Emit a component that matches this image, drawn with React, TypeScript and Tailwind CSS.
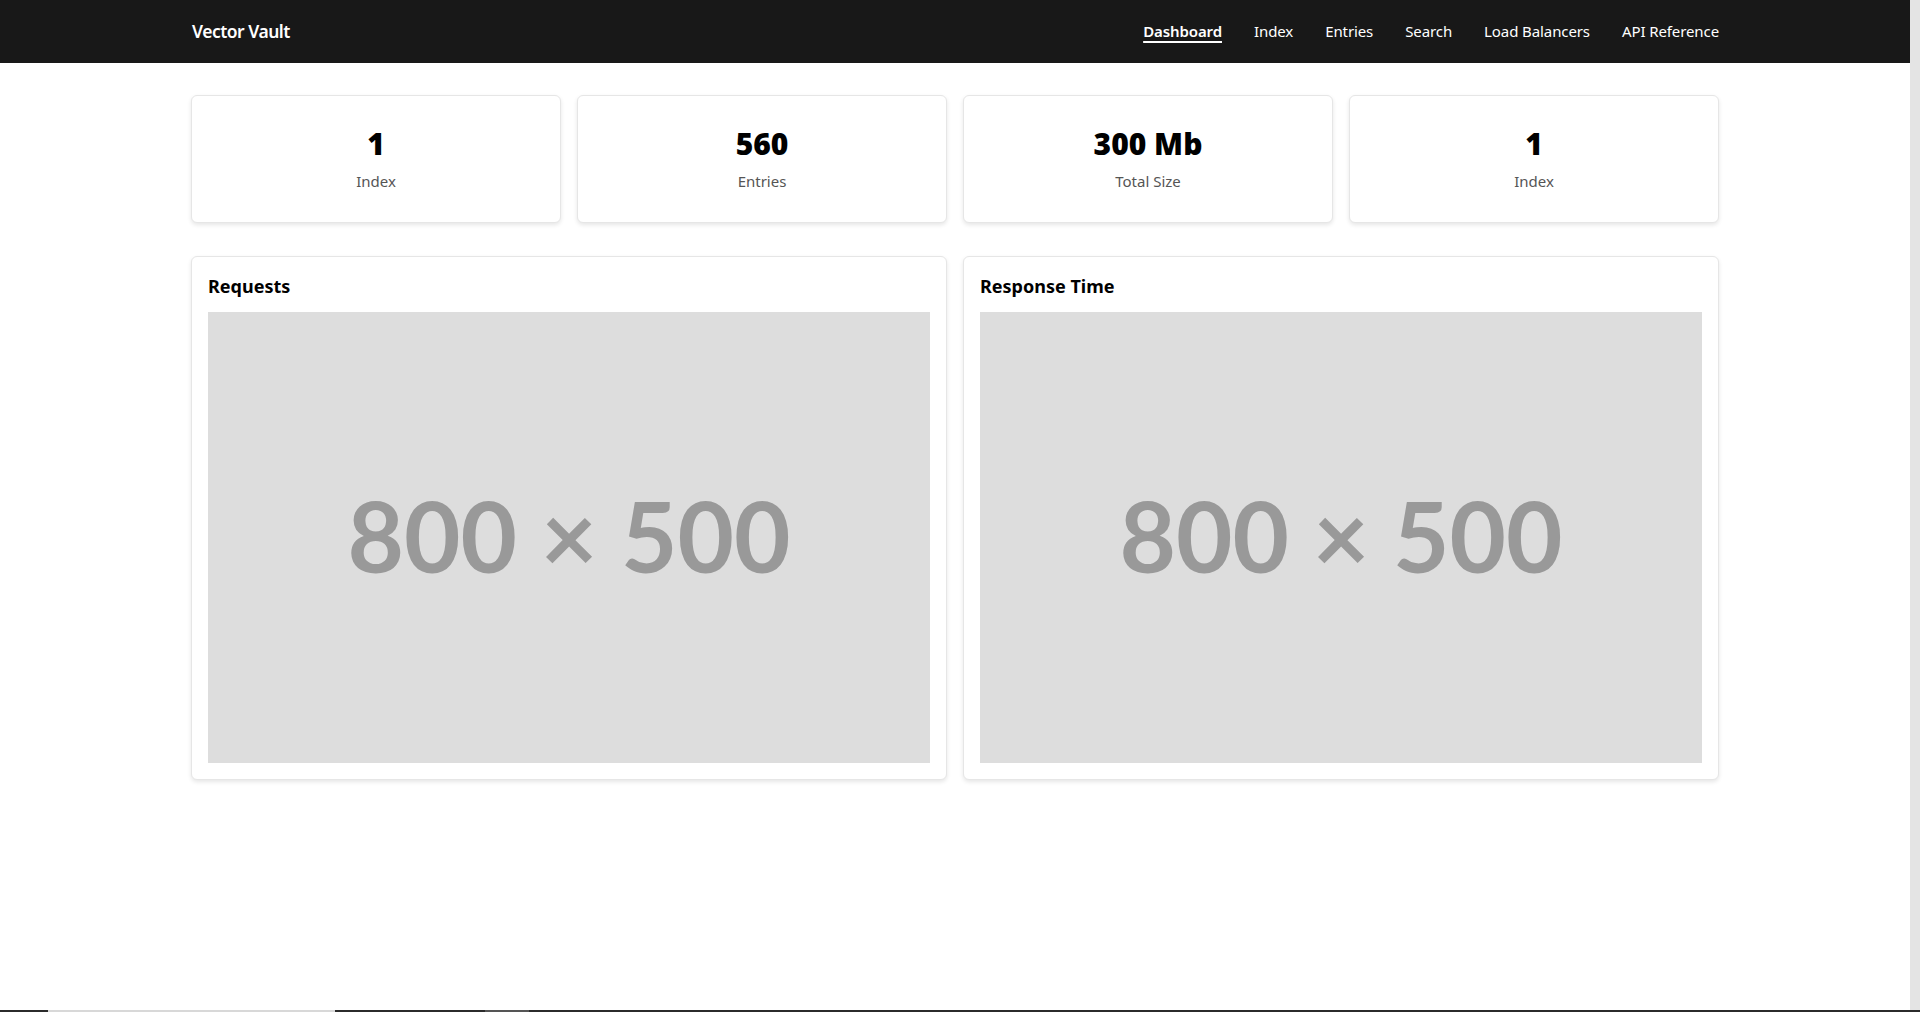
import React from "react";

const stats = [
  { value: "1", label: "Index" },
  { value: "560", label: "Entries" },
  { value: "300 Mb", label: "Total Size" },
  { value: "1", label: "Index" },
];

const links = ["Dashboard", "Index", "Entries", "Search", "Load Balancers", "API Reference"];

function Placeholder() {
  return (
    <svg viewBox="0 0 800 500" className="block w-full h-auto">
      <rect width="800" height="500" fill="#dddddd" />
      <text
        x="400"
        y="248"
        textAnchor="middle"
        dominantBaseline="central"
        fontFamily="Lato, 'Noto Sans', sans-serif"
        fontWeight="700"
        fontSize="108"
        fill="#999999"
      >
        800 × 500
      </text>
    </svg>
  );
}

function ChartCard({ title }: { title: string }) {
  return (
    <div className="bg-white border border-[#e6e6e6] rounded-md shadow-[0_2px_4px_rgba(0,0,0,0.1)] p-4">
      <h2 className="text-[18px] leading-[27px] font-bold text-black mb-3">{title}</h2>
      <Placeholder />
    </div>
  );
}

export default function App() {
  return (
    <div
      className="h-[1012px] w-full flex flex-col overflow-hidden"
      style={{ fontFamily: "'Noto Sans', 'Open Sans', sans-serif" }}
    >
      <div className="flex-1 flex min-h-0">
        <div className="flex-1 bg-white">
          <nav className="h-[63px] bg-[#181818]">
            <div className="w-[80%] mx-auto h-full flex items-center justify-between">
              <span className="text-white text-[17.5px] font-semibold tracking-[-0.5px] pl-px">Vector Vault</span>
              <div className="flex items-center gap-8">
                {links.map((l, i) => (
                  <a
                    key={l}
                    className={
                      i === 0
                        ? "text-white text-[15px] font-semibold underline underline-offset-4 decoration-[1.5px] tracking-[-0.1px]"
                        : "text-white text-[15px] tracking-[-0.1px]"
                    }
                  >
                    {l}
                  </a>
                ))}
              </div>
            </div>
          </nav>
          <main className="w-[80%] mx-auto pt-8">
            <div className="grid grid-cols-4 gap-4">
              {stats.map((s, i) => (
                <div
                  key={i}
                  className="bg-white border border-[#e6e6e6] rounded-md shadow-[0_2px_4px_rgba(0,0,0,0.1)] pt-[30px] pb-[29px] flex flex-col items-center"
                >
                  <div className="text-[30px] leading-9 font-black text-black">{s.value}</div>
                  <div className="text-[15px] leading-6 text-[#555555] mt-[7px]">{s.label}</div>
                </div>
              ))}
            </div>
            <div className="grid grid-cols-2 gap-4 mt-[33px]">
              <ChartCard title="Requests" />
              <ChartCard title="Response Time" />
            </div>
          </main>
        </div>
        <div className="w-[10px] bg-[#e4e4e4]" />
      </div>
      <div className="h-[2px] bg-[#2b2b2b] flex">
        <div className="w-[48px]" />
        <div className="w-[287px] bg-[#d8d8d8]" />
        <div className="w-[150px]" />
        <div className="w-[44px] bg-[#555555]" />
      </div>
    </div>
  );
}
